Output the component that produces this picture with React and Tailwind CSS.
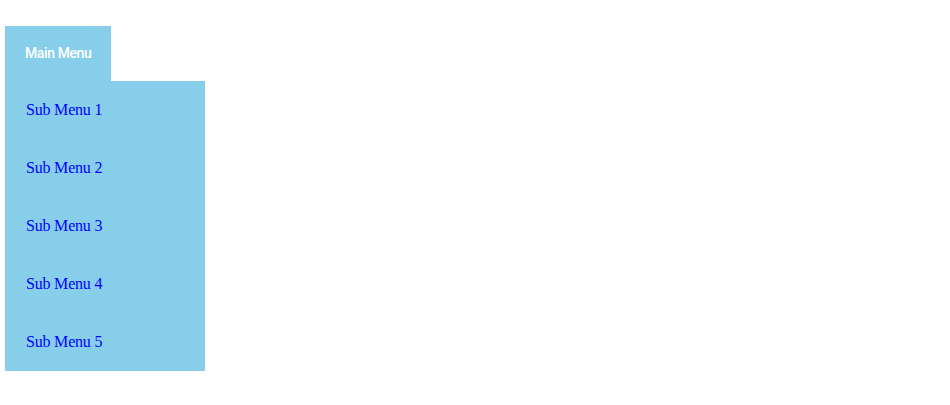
export default function App() {
  const items = ["Sub Menu 1", "Sub Menu 2", "Sub Menu 3", "Sub Menu 4", "Sub Menu 5"];
  return (
    <div className="w-[950px] h-[405px] bg-white pt-[26px] pl-[5px]">
      <div className="flex flex-col items-start">
        <div
          className="w-[106px] h-[55px] bg-[#87ceeb] flex items-center pl-[20px] text-white text-[14px] font-medium tracking-[-0.4px]"
          style={{ fontFamily: "Roboto, 'Liberation Sans', sans-serif" }}
        >
          Main Menu
        </div>
        <div className="w-[200px] bg-[#87ceeb] flex flex-col">
          {items.map((t) => (
            <a
              key={t}
              href="#"
              className="h-[58px] flex items-center pl-[21px] text-[16px] text-[#0000ff] tracking-[-0.2px]"
              style={{ fontFamily: "'Liberation Serif', serif" }}
            >
              {t}
            </a>
          ))}
        </div>
      </div>
    </div>
  );
}
